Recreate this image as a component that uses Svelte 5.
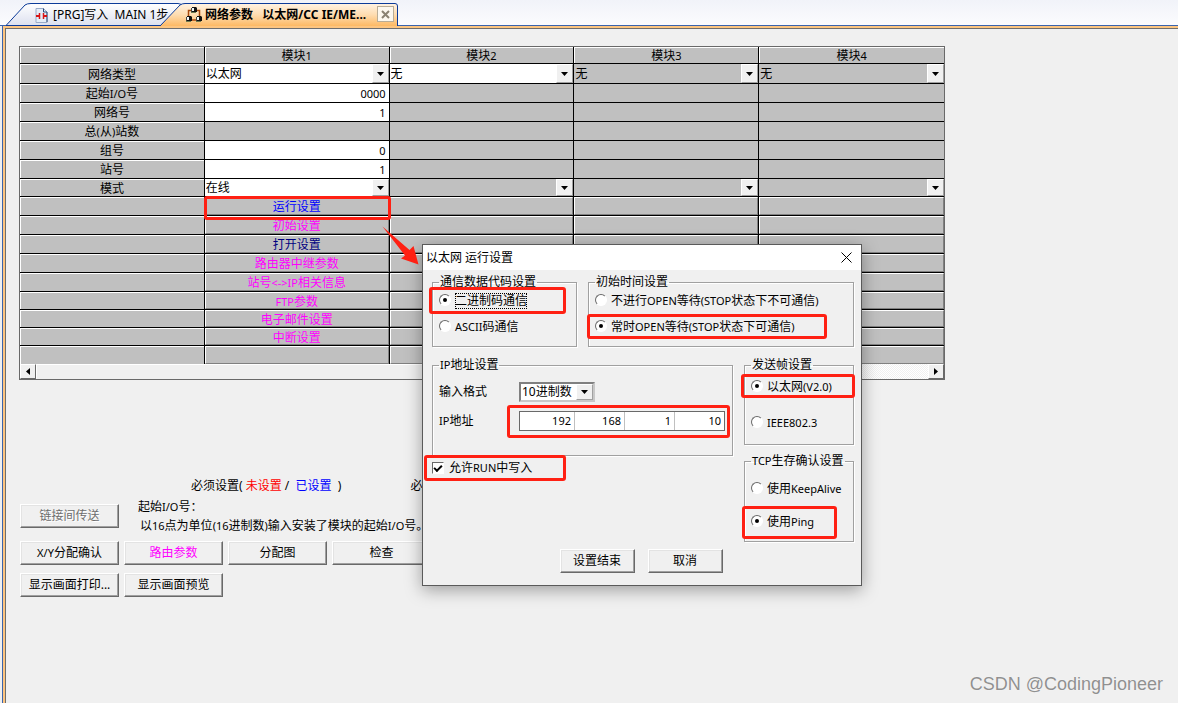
<script lang="ts">
  type Kind = 'select' | 'input' | 'blank' | 'link';

  interface Row {
    label: string;
    height: number;
    kind: Kind;
    values: string[];
    tone?: string;
  }

  const modules = ['模块1', '模块2', '模块3', '模块4'];

  const rows: Row[] = [
    { label: '网络类型', height: 20, kind: 'select', values: ['以太网', '无', '无', '无'] },
    { label: '起始I/O号', height: 19, kind: 'input', values: ['0000'] },
    { label: '网络号', height: 19, kind: 'input', values: ['1'] },
    { label: '总(从)站数', height: 19, kind: 'blank', values: [] },
    { label: '组号', height: 19, kind: 'input', values: ['0'] },
    { label: '站号', height: 19, kind: 'input', values: ['1'] },
    { label: '模式', height: 18, kind: 'select', values: ['在线', '', '', ''] },
    { label: '', height: 19, kind: 'link', values: ['运行设置'], tone: 'set' },
    { label: '', height: 19, kind: 'link', values: ['初始设置'], tone: 'optional' },
    { label: '', height: 19, kind: 'link', values: ['打开设置'], tone: 'done' },
    { label: '', height: 19, kind: 'link', values: ['路由器中继参数'], tone: 'optional' },
    { label: '', height: 19, kind: 'link', values: ['站号<->IP相关信息'], tone: 'optional' },
    { label: '', height: 18, kind: 'link', values: ['FTP参数'], tone: 'optional' },
    { label: '', height: 18, kind: 'link', values: ['电子邮件设置'], tone: 'optional' },
    { label: '', height: 18, kind: 'link', values: ['中断设置'], tone: 'optional' },
    { label: '', height: 18, kind: 'link', values: [] }
  ];

  let code = $state('binary');
  let timing = $state('always');
  let frame = $state('v2');
  let keepalive = $state('ping');
  let allowWrite = $state(true);
  let ip = $state(['192', '168', '1', '10']);

  // The first two modules can be edited in the type row, only the first elsewhere
  function editable(row: number, col: number) {
    return row === 0 ? col < 2 : col === 0;
  }

  // Latin runs are set one size smaller than the Chinese around them
  function runs(text: string) {
    return text.match(/[!-~]+|[^!-~]+/g) ?? [];
  }
</script>

{#snippet mixed(text: string)}
  {#each runs(text) as run}{#if /^[!-~]/.test(run)}<small>{run}</small>{:else}{run}{/if}{/each}
{/snippet}

{#snippet arrow()}
  <span class="drop" aria-hidden="true">
    <svg width="7" height="4" viewBox="0 0 7 4"><path d="M0 0h7L3.500 4z" /></svg>
  </span>
{/snippet}

<div class="app">
  <nav class="tabs">
    <button class="tab tab-prg">
      <svg class="shape" viewBox="0 0 182 26" preserveAspectRatio="none">
        <defs>
          <linearGradient id="blue" x1="0" y1="0" x2="0" y2="1">
            <stop offset="0" stop-color="#fff" />
            <stop offset="1" stop-color="#dce0ef" />
          </linearGradient>
        </defs>
        <path d="M0 25.500 L19 5 Q21 3.500 25 3.500 H172 Q176 3.500 177 7 V25.500 Z" fill="url(#blue)" stroke="#0c3b99" />
      </svg>
      <svg class="icon" width="13" height="15" viewBox="0 0 13 15">
        <path d="M1 .5h7.500l3.500 3.500v10.500H1z" fill="#e4edf8" stroke="#9aabc8" />
        <path d="M8.500.500v3.500h3.500v10" fill="none" stroke="#2f4d78" />
        <path d="M1 8h3M9 8h3" stroke="#d81414" stroke-width="2" />
        <path d="M4.500 5v6M8.500 5v6" stroke="#d81414" stroke-width="1.500" />
      </svg>
      <span>[PRG]写入&nbsp; MAIN 1步</span>
    </button>
    <button class="tab tab-net">
      <svg class="shape" viewBox="0 0 238 26" preserveAspectRatio="none">
        <defs>
          <linearGradient id="orange" x1="0" y1="0" x2="0" y2="1">
            <stop offset="0" stop-color="#fff3e4" />
            <stop offset=".5" stop-color="#fedcb0" />
            <stop offset="1" stop-color="#fdb964" />
          </linearGradient>
        </defs>
        <path d="M0 26 L20 5 Q22 3.500 25 3.500 H235 Q237.500 3.500 237.500 6 V26" fill="url(#orange)" stroke="#0c3b99" />
      </svg>
      <svg class="icon" width="16" height="16" viewBox="0 0 16 16">
        <path d="M5 3.500H2.500v6M11 3.500h2.500v6M6 13h4" fill="none" stroke="#a84a0c" stroke-width="1.500" />
        <g fill="#111">
          <path d="M6 0h4l1 1v4H6zM1 9h4l1 1v4H1zM11 9h4l1 1v4h-5z" />
        </g>
        <g fill="#f2f6f4">
          <path d="M5 1h3v3H5zM0 10h3v3H0zM10 10h3v3h-3z" />
        </g>
        <path d="M5 5.500h5M0 14.500h5M10 14.500h5" stroke="#6f7c50" />
        <path d="M5.500 1v4M.5 10v4M10.500 10v4" stroke="#444" />
      </svg>
      <span>网络参数&nbsp;&nbsp; 以太网/CC IE/ME...</span>
    </button>
    <button class="tab-close" aria-label="关闭">
      <svg width="9" height="9" viewBox="0 0 9 9"><path d="M1 1l7 7M8 1l-7 7" stroke="#8b8272" stroke-width="2" /></svg>
    </button>
  </nav>

  <main class="page">
    <div class="sheet">
      <table>
        <thead>
          <tr>
            <th class="head"></th>
            {#each modules as name}
              <th class="head" scope="col">{@render mixed(name)}</th>
            {/each}
          </tr>
        </thead>
        <tbody>
          {#each rows as row, r}
            <tr style:height="{row.height}px">
              <th class="head" scope="row">{@render mixed(row.label)}</th>
              {#each modules as name, c}
                <td class:open={row.kind !== 'link' && row.kind !== 'blank' && editable(r, c)}>
                  {#if row.kind === 'select'}
                    <div class="pick">
                      <select aria-label="{name} {row.label}">
                        <option>{row.values[c]}</option>
                      </select>
                      {@render arrow()}
                    </div>
                  {:else if row.kind === 'input' && c === 0}
                    <input class="number" aria-label="{name} {row.label}" value={row.values[0]} />
                  {:else if row.kind === 'link'}
                    <button class="cell-button {row.tone ?? ''}" aria-label={row.values[c] ?? name}>
                      {@render mixed(row.values[c] ?? '')}
                    </button>
                  {/if}
                </td>
              {/each}
            </tr>
          {/each}
        </tbody>
      </table>
      <div class="scrollbar">
        <button class="scroll-step" aria-label="向左滚动">
          <svg width="4" height="7" viewBox="0 0 4 7"><path d="M4 0v7L0 3.500z" /></svg>
        </button>
        <div class="track"><div class="thumb"></div></div>
        <button class="scroll-step" aria-label="向右滚动">
          <svg width="4" height="7" viewBox="0 0 4 7"><path d="M0 0v7l4-3.500z" /></svg>
        </button>
      </div>
    </div>

    <div class="lower">
      <p class="legend-line">
        <span>必须设置( <span class="unset">未设置</span> / <span class="set">&nbsp;已设置</span> &nbsp;)</span>
        <span>必须设置</span>
      </p>

      <div class="help">
        <button class="push" disabled>链接间传送</button>
        <p>{@render mixed('起始I/O号：')}<br />&thinsp;{@render mixed('以16点为单位(16进制数)输入安装了模块的起始I/O号。')}</p>
      </div>

      <div class="actions">
        <button class="push">{@render mixed('X/Y分配确认')}</button>
        <button class="push optional">路由参数</button>
        <button class="push">分配图</button>
        <button class="push">检查</button>
        <button class="push">显示画面打印...</button>
        <button class="push">显示画面预览</button>
      </div>
    </div>
  </main>

  <div class="dialog" role="dialog" aria-labelledby="dialog-title">
    <header>
      <h1 id="dialog-title">以太网 运行设置</h1>
      <button class="close" aria-label="关闭">
        <svg width="11" height="11" viewBox="0 0 11 11"><path d="M.5.500l10 10M10.500.500l-10 10" stroke="#000" /></svg>
      </button>
    </header>

    <div class="body">
      <div class="line">
        <fieldset class="code">
          <legend>通信数据代码设置</legend>
          <label><input type="radio" value="binary" bind:group={code} /><span class="focused">二进制码通信</span></label>
          <label><input type="radio" value="ascii" bind:group={code} /><span>{@render mixed('ASCII码通信')}</span></label>
        </fieldset>
        <fieldset class="timing">
          <legend>初始时间设置</legend>
          <label>
            <input type="radio" value="never" bind:group={timing} />
            <span>{@render mixed('不进行OPEN等待(STOP状态下不可通信)')}</span>
          </label>
          <label>
            <input type="radio" value="always" bind:group={timing} />
            <span>{@render mixed('常时OPEN等待(STOP状态下可通信)')}</span>
          </label>
        </fieldset>
      </div>

      <div class="columns">
        <div>
          <fieldset class="address">
            <legend>{@render mixed('IP地址设置')}</legend>
            <label for="format">输入格式</label>
            <div class="pick format">
              <select id="format">
                <option>10进制数</option>
              </select>
              {@render arrow()}
            </div>
            <label for="ip0"><span>{@render mixed('IP地址')}</span></label>
            <div class="ip">
              {#each ip as _, i}
                <input id="ip{i}" aria-label="IP地址 {i + 1}" bind:value={ip[i]} />
              {/each}
            </div>
          </fieldset>
          <label class="allow">
            <input type="checkbox" bind:checked={allowWrite} />
            <span>{@render mixed('允许RUN中写入')}</span>
          </label>
        </div>

        <div class="side">
          <fieldset class="frame">
            <legend>发送帧设置</legend>
            <label><input type="radio" value="v2" bind:group={frame} /><span>{@render mixed('以太网(V2.0)')}</span></label>
            <label><input type="radio" value="ieee" bind:group={frame} /><span>{@render mixed('IEEE802.3')}</span></label>
          </fieldset>
          <fieldset class="tcp">
            <legend>{@render mixed('TCP生存确认设置')}</legend>
            <label>
              <input type="radio" value="keepalive" bind:group={keepalive} />
              <span>{@render mixed('使用KeepAlive')}</span>
            </label>
            <label><input type="radio" value="ping" bind:group={keepalive} /><span>{@render mixed('使用Ping')}</span></label>
          </fieldset>
        </div>
      </div>

      <footer>
        <button class="push">设置结束</button>
        <button class="push">取消</button>
      </footer>
    </div>
  </div>

  <!-- Red call-outs drawn over the window -->
  <svg class="callouts" width="860" height="560" viewBox="0 0 860 560" aria-hidden="true">
    <g fill="none" stroke="#ff2013" stroke-width="3">
      <rect x="205.500" y="197.500" width="184" height="21" rx="1.500" />
      <rect x="430.500" y="288.500" width="134" height="24" rx="1.500" />
      <rect x="588.500" y="315.500" width="237" height="22" rx="1.500" />
      <rect x="742.500" y="375.500" width="111" height="21" rx="1.500" />
      <rect x="508.500" y="406.500" width="220" height="30" rx="1.500" />
      <rect x="425.500" y="456.500" width="139" height="23" rx="1.500" />
      <rect x="743.500" y="507.500" width="92" height="30" rx="1.500" />
    </g>
    <path d="M382.500 226.500 L409.500 250 L413.500 246 L418.500 264.500 L401 258.500 L405 255.500 Z" fill="#ff2013" />
  </svg>

  <p class="watermark">CSDN @CodingPioneer</p>
</div>

<style>
  :global(body) {
    background: #f0f0f0;
  }

  .app {
    position: relative;
    display: flex;
    flex-direction: column;
    min-height: 100vh;
    overflow: hidden;
    font: 12px/16px 'Noto Sans', 'Noto Sans CJK SC', sans-serif;
    color: #000;
    background: #f0f0f0;
  }

  button,
  input,
  select {
    font: inherit;
    color: inherit;
    margin: 0;
    padding: 0;
    box-sizing: border-box;
    border-radius: 0;
  }

  p,
  h1 {
    margin: 0;
  }

  small {
    font-size: 11px;
    line-height: 12px;
  }

  /* Tabs */
  .tabs {
    display: flex;
    height: 26px;
    padding-left: 6px;
    background: linear-gradient(#f1f3f9, #fcfcfe);
    box-shadow: inset 0 -1px #3b64ad;
  }

  .tab {
    position: relative;
    display: flex;
    align-items: center;
    gap: 5px;
    height: 26px;
    padding: 4px 0 0;
    border: 0;
    background: none;
    white-space: nowrap;
  }

  .tab > * {
    position: relative;
  }

  .tab .shape {
    position: absolute;
    inset: 0;
    width: 100%;
    height: 100%;
  }

  .tab-prg {
    width: 182px;
    padding-left: 29px;
  }

  .tab-net {
    width: 238px;
    margin-left: -28px;
    padding-left: 26px;
    gap: 3px;
    font-weight: bold;
  }

  .tab-close {
    position: relative;
    display: grid;
    place-items: center;
    width: 17px;
    height: 16px;
    margin: 6px 0 0 -21px;
    border: 1px solid #b9ad97;
    background: #fdf8ef;
  }

  /* Page */
  .page {
    flex: 1;
    margin-left: 2px;
    padding: 20px 16px 40px;
    border-left: 1px solid #3b64ad;
    box-shadow: inset 2px 2px #fdc580, inset 3px 3px #6e6e6e;
  }

  .sheet {
    max-width: 924px;
    border: 1px solid #696969;
  }

  table {
    width: 100%;
    table-layout: fixed;
    border-collapse: separate;
    border-spacing: 0;
  }

  thead tr {
    height: 17px;
  }

  th,
  td {
    height: inherit;
    box-sizing: border-box;
    padding: 0;
    border-right: 1px solid #000;
    border-bottom: 1px solid #000;
    background: #c0c0c0;
    line-height: 14px;
  }

  th:last-child,
  td:last-child {
    border-right: 0;
  }

  tbody tr:last-child > * {
    border-bottom: 0;
  }

  .head {
    padding-top: 2px;
    font-weight: normal;
    box-shadow: inset 1px 1px #fff;
  }

  .open {
    background: #fff;
  }

  .pick {
    display: grid;
    height: 100%;
  }

  .pick > * {
    grid-area: 1 / 1;
  }

  select {
    appearance: none;
    width: 100%;
    padding-left: 1px;
    border: 0;
    background: none;
    line-height: 14px;
  }

  .drop {
    justify-self: end;
    display: grid;
    place-items: center;
    width: 17px;
    box-sizing: border-box;
    border: 1px solid;
    border-color: #fff #a0a0a0 #a0a0a0 #fff;
    background: #f0f0f0;
    pointer-events: none;
  }

  .number {
    display: block;
    width: 100%;
    height: 16px;
    padding-right: 3px;
    border: 0;
    background: none;
    font-size: 11px;
    text-align: right;
  }

  .cell-button {
    display: block;
    width: 100%;
    height: 100%;
    padding-top: 2px;
    border: 1px solid;
    border-color: #fff #808080 #808080 #fff;
    background: #c0c0c0;
    line-height: 12px;
  }

  .set {
    color: #00f;
  }

  .done {
    color: #000080;
  }

  .optional {
    color: #f0f;
  }

  .unset {
    color: #f00;
  }

  .scrollbar {
    display: flex;
    height: 15px;
  }

  .scroll-step {
    display: grid;
    place-items: center;
    width: 16px;
    border: 1px solid;
    border-color: #fff #696969 #696969 #fff;
    background: #f0f0f0;
  }

  .track {
    flex: 1;
    background: repeating-conic-gradient(#fff 0 25%, #f0f0f0 0 50%) 0 0 / 2px 2px;
  }

  .thumb {
    width: 90%;
    height: 100%;
    box-sizing: border-box;
    border: 1px solid;
    border-color: #fff #696969 #f0f0f0 #fff;
    background: #f0f0f0;
  }

  /* Lower part of the page */
  .lower {
    padding-left: 1px;
  }

  .legend-line {
    display: flex;
    gap: 69px;
    margin: 98px 0 3px 171px;
    white-space: pre;
  }

  .help {
    display: flex;
    align-items: center;
    gap: 19px;
    line-height: 19px;
    white-space: nowrap;
  }

  .push {
    height: 24px;
    border: 1px solid;
    border-color: #fff #696969 #696969 #fff;
    background: #f0f0f0;
    box-shadow: inset -1px -1px #a0a0a0, inset 1px 1px #e3e3e3;
    line-height: 16px;
  }

  .push:disabled {
    color: #6d6d6d;
    text-shadow: 1px 1px #fff;
  }

  .help .push {
    width: 99px;
  }

  .actions {
    display: grid;
    grid-template-columns: repeat(4, 99px);
    gap: 8px 5px;
    margin-top: 6px;
  }

  /* Dialog */
  .dialog {
    position: absolute;
    top: 244px;
    left: 422px;
    width: 440px;
    box-sizing: border-box;
    border: 1px solid #5a5a5a;
    background: #f0f0f0;
    box-shadow: 0 4px 16px rgba(0, 0, 0, 0.35);
    white-space: nowrap;
  }

  .dialog header {
    display: flex;
    align-items: center;
    justify-content: space-between;
    height: 25px;
    padding: 0 9px 0 3px;
    background: #fff;
  }

  h1 {
    font-size: 12px;
    font-weight: normal;
  }

  .close {
    display: grid;
    border: 0;
    background: none;
  }

  .body {
    padding: 4px 7px 12px 9px;
  }

  .line {
    display: flex;
    gap: 11px;
  }

  fieldset {
    display: flex;
    flex-direction: column;
    min-width: 0;
    margin: 0;
    padding: 3px 6px 11px;
    border: 1px solid #a0a0a0;
    box-shadow: 1px 1px #fff, inset 1px 1px #fff;
    gap: 10px;
    box-sizing: border-box;
  }

  legend {
    height: 16px;
    padding: 0 1px;
  }

  fieldset label {
    display: flex;
    height: 16px;
    gap: 4px;
  }

  .code {
    width: 145px;
  }

  .timing {
    flex: 1;
  }

  .focused {
    outline: 1px dotted #000;
    outline-offset: -1px;
  }

  input[type='radio'] {
    appearance: none;
    display: grid;
    place-items: center;
    width: 12px;
    height: 12px;
    margin-top: 1px;
    border: 1px solid;
    border-color: #696969 #fff #fff #696969;
    border-radius: 50%;
    background: #fff;
  }

  input[type='radio']:checked::before {
    content: '';
    width: 4px;
    height: 4px;
    border-radius: 50%;
    background: #000;
  }

  .columns {
    display: grid;
    grid-template-columns: 1fr 110px;
    gap: 11px;
    margin-top: 10px;
  }

  .address {
    display: grid;
    grid-template-columns: 73px 1fr;
    align-items: center;
    gap: 9px 7px;
    padding-top: 9px;
    padding-bottom: 24px;
  }

  .format {
    width: 76px;
    height: 20px;
    box-sizing: border-box;
    border: 2px solid;
    border-color: #808080 #c8c8c8 #c8c8c8 #808080;
    background: #fff;
  }

  .ip {
    display: flex;
    height: 20px;
    width: 206px;
    box-sizing: border-box;
    border: 1px solid #696969;
    background: #fff;
  }

  .ip input {
    width: 0;
    flex: 1;
    padding-right: 3px;
    border: 0;
    border-left: 1px solid #c0c0c0;
    background: none;
    font-size: 11px;
    text-align: right;
  }

  .ip input:first-child {
    border-left: 0;
    flex: 1 0 8px;
  }

  .allow {
    display: flex;
    align-items: center;
    gap: 5px;
    margin-top: 4px;
  }

  input[type='checkbox'] {
    appearance: none;
    width: 12px;
    height: 12px;
    border: 1px solid;
    border-color: #696969 #fff #fff #696969;
    background: #fff;
    display: grid;
    place-items: center;
  }

  input[type='checkbox']:checked::before {
    content: '';
    width: 8px;
    height: 5px;
    border: solid #000;
    border-width: 0 0 2px 2px;
    box-sizing: border-box;
    transform: translateY(-1px) rotate(-45deg);
  }

  .side {
    display: flex;
    flex-direction: column;
    gap: 8px;
  }

  .frame {
    gap: 20px;
    padding-top: 6px;
    padding-bottom: 13px;
  }

  .tcp {
    gap: 17px;
    padding-top: 12px;
  }

  .dialog footer {
    display: flex;
    justify-content: center;
    gap: 13px;
    margin: 7px 4px 0 0;
  }

  .dialog footer .push {
    width: 75px;
  }

  .callouts {
    position: absolute;
    top: 0;
    left: 0;
    pointer-events: none;
  }

  .watermark {
    position: absolute;
    right: 15px;
    bottom: 7px;
    font: 18px/24px 'Liberation Sans', sans-serif;
    color: #909090;
    text-shadow: 0 0 1px #fff;
  }
</style>
